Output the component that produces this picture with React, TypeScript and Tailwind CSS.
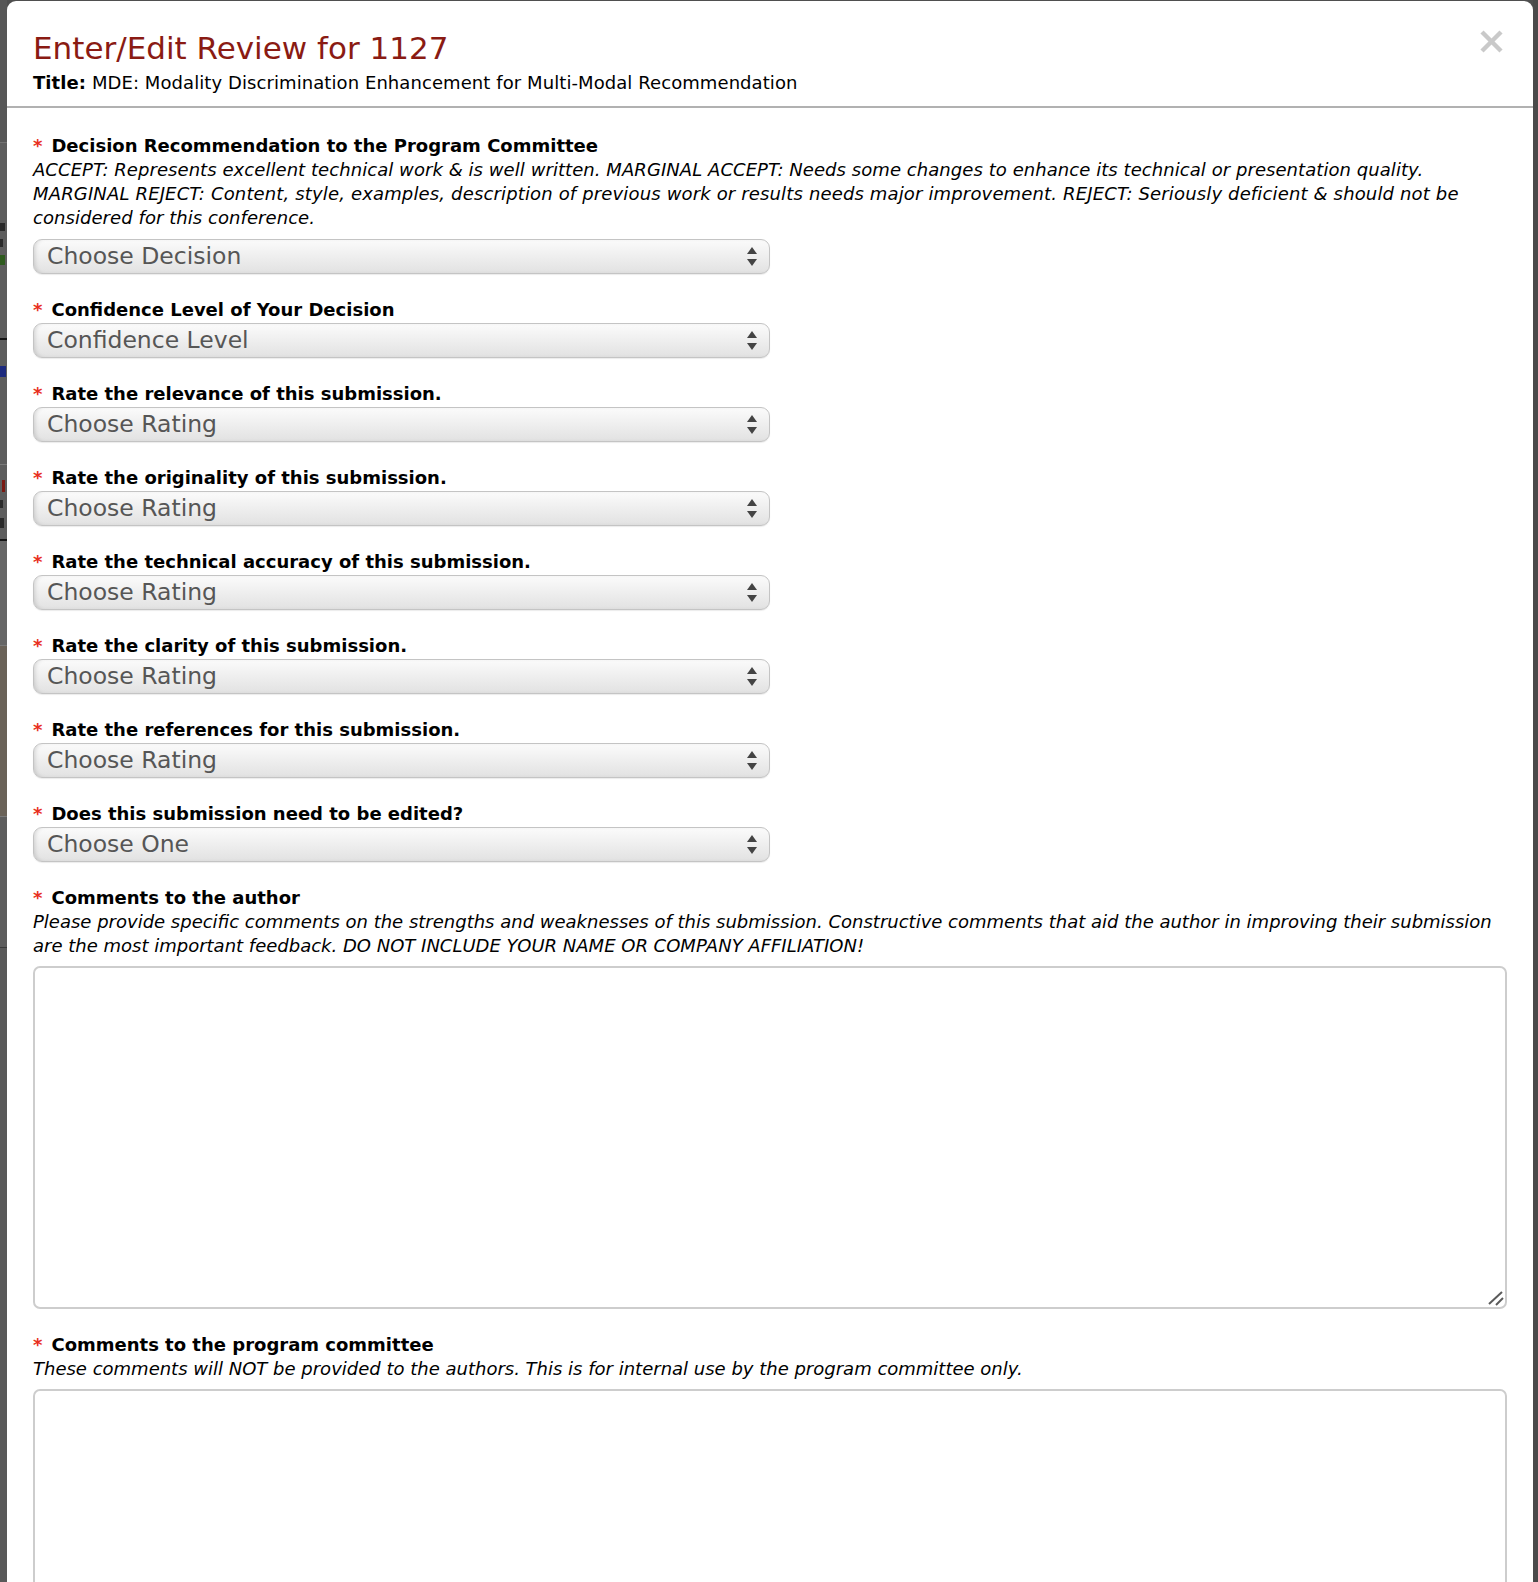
import React from "react";

const Req = () => <span className="mr-[9px] font-bold text-[#e8301f]">*</span>;

function Select({ text }: { text: string }) {
  return (
    <div className="relative flex h-[35px] w-[737px] items-center rounded-[9px] border border-[#c4c4c4] bg-gradient-to-b from-[#fbfbfb] to-[#e2e2e2] pl-[13px] pr-[12px] shadow-[inset_3px_0_4px_-2px_rgba(0,0,0,0.15),0_1px_1px_rgba(0,0,0,0.08)]">
      <span className="flex-1 text-[23.5px] leading-none text-[#565656]">{text}</span>
      <svg width="10" height="20" viewBox="0 0 10 20" className="shrink-0">
        <polygon points="5,0 10,7 0,7" fill="#444" />
        <polygon points="0,12 10,12 5,19" fill="#444" />
      </svg>
    </div>
  );
}

function Field({ label, text }: { label: string; text: string }) {
  return (
    <div className="mb-[24px]">
      <div className="mb-[1px] text-[18px] font-bold leading-[24px]">
        <Req />
        {label}
      </div>
      <Select text={text} />
    </div>
  );
}

function Area() {
  return (
    <div className="relative">
      <textarea className="block h-[343px] w-full resize-none rounded-[7px] border-2 border-[#cdcdcd] outline-none" />
      <svg width="16" height="16" viewBox="0 0 16 16" className="absolute bottom-[3px] right-[3px]">
        <line x1="1" y1="14" x2="14" y2="2" stroke="#5a5a5a" strokeWidth="2" />
        <line x1="8" y1="15" x2="15" y2="8" stroke="#5a5a5a" strokeWidth="2" />
      </svg>
    </div>
  );
}

function Strip() {
  return (
    <div className="flex w-[7px] shrink-0 flex-col overflow-hidden bg-[#5d5d5d]">
      <div className="h-[142px] bg-[#575757]" />
      <div className="h-[1px] bg-[#727272]" />
      <div className="h-[80px]" />
      <div className="h-[8px] w-[5px] bg-[#2a2a2a]" />
      <div className="h-[8px]" />
      <div className="h-[8px] w-[3px] bg-[#2a2a2a]" />
      <div className="h-[8px]" />
      <div className="h-[10px] w-[5px] bg-[#2e5a1e]" />
      <div className="h-[73px]" />
      <div className="h-[2px] bg-[#151515]" />
      <div className="h-[26px]" />
      <div className="h-[11px] w-[6px] bg-[#1c2a7e]" />
      <div className="h-[87px]" />
      <div className="h-[1px] bg-[#7a7a7a]" />
      <div className="h-[15px]" />
      <div className="ml-[2px] h-[12px] w-[3px] bg-[#7a1a12]" />
      <div className="h-[8px]" />
      <div className="h-[8px] w-[3px] bg-[#2a2a2a]" />
      <div className="h-[10px]" />
      <div className="h-[10px] w-[4px] bg-[#2a2a2a]" />
      <div className="h-[11px]" />
      <div className="h-[2px] bg-[#151515]" />
      <div className="h-[104px] bg-[#666]" />
      <div className="h-[1px] bg-[#7a7a7a]" />
      <div className="h-[170px] bg-[#6a6258]" />
      <div className="h-[1px] bg-[#7a7a7a]" />
      <div className="h-[130px]" />
      <div className="h-[1px] bg-[#3a3a3a]" />
      <div className="flex-1 bg-[#595959]" />
    </div>
  );
}

export default function App() {
  return (
    <div className="flex h-[1582px] w-[1538px] overflow-hidden bg-[#4f4f4f] font-['DejaVu_Sans',Verdana,sans-serif] text-black">
      <Strip />
      <div className="mt-[1px] flex-1 overflow-hidden rounded-t-[9px] bg-white">
        <div className="flex border-b-2 border-[#b1b1b1] pb-[11px] pl-[26px] pr-[30px] pt-[29px]">
          <div className="flex-1">
            <div className="text-[31px] leading-[36px] text-[#8a1b13]">Enter/Edit Review for 1127</div>
            <div className="mt-[5px] text-[18px] leading-[24px] tracking-[0.08px]">
              <span className="font-bold">Title:</span> MDE: Modality Discrimination Enhancement for Multi-Modal
              Recommendation
            </div>
          </div>
          <svg width="23" height="23" viewBox="0 0 23 23" className="shrink-0">
            <line x1="2" y1="2" x2="21" y2="21" stroke="#c9c9c9" strokeWidth="4.5" />
            <line x1="21" y1="2" x2="2" y2="21" stroke="#c9c9c9" strokeWidth="4.5" />
          </svg>
        </div>
        <div className="px-[26px] pt-[26px]">
          <div className="text-[18px] font-bold leading-[24px]">
            <Req />
            Decision Recommendation to the Program Committee
          </div>
          <div className="mb-[9px] text-[18px] italic leading-[24px] tracking-[0.06px]">
            ACCEPT: Represents excellent technical work &amp; is well written. MARGINAL ACCEPT: Needs some changes to
            enhance its technical or presentation quality.
            <br />
            <span className="tracking-[0.15px]">
              MARGINAL REJECT: Content, style, examples, description of previous work or results needs major
              improvement. REJECT: Seriously deficient &amp; should not be
            </span>
            <br />
            considered for this conference.
          </div>
          <div className="mb-[24px]">
            <Select text="Choose Decision" />
          </div>
          <Field label="Confidence Level of Your Decision" text="Confidence Level" />
          <Field label="Rate the relevance of this submission." text="Choose Rating" />
          <Field label="Rate the originality of this submission." text="Choose Rating" />
          <Field label="Rate the technical accuracy of this submission." text="Choose Rating" />
          <Field label="Rate the clarity of this submission." text="Choose Rating" />
          <Field label="Rate the references for this submission." text="Choose Rating" />
          <Field label="Does this submission need to be edited?" text="Choose One" />

          <div className="text-[18px] font-bold leading-[24px]">
            <Req />
            Comments to the author
          </div>
          <div className="mb-[8px] text-[18px] italic leading-[24px]">
            Please provide specific comments on the strengths and weaknesses of this submission. Constructive comments
            that aid the author in improving their submission
            <br />
            are the most important feedback. DO NOT INCLUDE YOUR NAME OR COMPANY AFFILIATION!
          </div>
          <Area />

          <div className="mt-[24px] text-[18px] font-bold leading-[24px]">
            <Req />
            Comments to the program committee
          </div>
          <div className="mb-[8px] text-[18px] italic leading-[24px]">
            These comments will NOT be provided to the authors. This is for internal use by the program committee only.
          </div>
          <Area />
        </div>
      </div>
      <div className="w-[5px] shrink-0 bg-[#4a4a4a]" />
    </div>
  );
}
